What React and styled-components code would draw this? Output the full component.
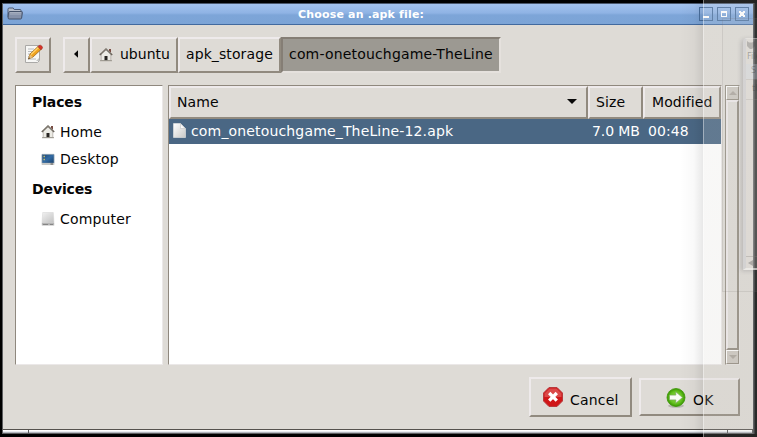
import React from "react";
import styled, { createGlobalStyle, css } from "styled-components";

const Global = createGlobalStyle`
  *, *::before, *::after { box-sizing: border-box; }
  html, body { margin: 0; background: #000; overflow: hidden; }
  body { font: 14px/18px "DejaVu Sans", sans-serif; color: #050505; }
  svg { display: block; flex: none; }
`;

const raised = css`
  border: 2px solid;
  border-color: #eeeaeb #918a7f #918a7f #eeeaeb;
`;

const Desktop = styled.div`
  position: relative;
  width: 757px;
  height: 437px;
  padding: 3px 3px 3px 2px;
  background: #000;
  overflow: hidden;
`;

const Window = styled.div`
  height: 431px;
  display: flex;
  flex-direction: column;
  background: #dedbd6;
  border: 1px solid #5d5e60;
  border-top-color: #49566b;
`;

const TitleBar = styled.header`
  height: 21px;
  flex: none;
  display: flex;
  align-items: center;
  padding: 0 4px;
  background: linear-gradient(#a3c2ee, #8fb3e4 45%, #7da5d8 55%, #7ca4d6);
  border-bottom: 1px solid #426a9f;
`;

const Title = styled.h1`
  flex: 1;
  margin: 0;
  padding: 1px 0 0 275px;
  font-size: 11px;
  line-height: 18px;
  letter-spacing: 0.17px;
  color: #fff;
`;

const WindowControls = styled.div`
  display: flex;
  gap: 4px;
`;

const ControlButton = styled.button`
  width: 14px;
  height: 14px;
  padding: 0;
  border: 1px solid #4a709f;
  background: transparent;
`;

const Toolbar = styled.nav`
  height: 36px;
  flex: none;
  display: flex;
  margin: 12px 0 12px 12px;
`;

const ToolButton = styled.button`
  ${raised}
  width: ${(p) => p.$w}px;
  height: 36px;
  padding: 0 0 2px ${(p) => p.$pad || 0}px;
  margin-right: ${(p) => p.$gap || 0}px;
  display: flex;
  align-items: center;
  gap: 7px;
  background: #dedbd6;
  color: inherit;
  font: inherit;
  letter-spacing: ${(p) => p.$track || 0}px;
  white-space: nowrap;
  ${(p) =>
    p.$active &&
    css`
      background: #9c9992;
      border-color: #857e75 #e5e1dd #e5e1dd #857e75;
    `}
`;

const Panels = styled.main`
  height: 280px;
  flex: none;
  display: flex;
  margin-left: 12px;
`;

const sunken = css`
  border: 1px solid;
  border-color: #8f887e #ebe8e8 #ebe8e8 #8f887e;
  background: #fff;
`;

const Sidebar = styled.aside`
  ${sunken}
  width: 148px;
  margin-right: 5px;
  padding-top: 1px;
`;

const GroupTitle = styled.h2`
  height: ${(p) => p.$h}px;
  margin: 0;
  padding: ${(p) => p.$top}px 0 0 16px;
  font-size: 14px;
  line-height: 18px;
  letter-spacing: -0.12px;
`;

const PlaceItem = styled.div`
  height: 27px;
  display: flex;
  align-items: center;
  gap: 5px;
  padding-left: 25px;
  letter-spacing: 0.16px;
`;

const FileList = styled.section`
  ${sunken}
  width: 554px;
  margin-right: 3px;
`;

const Row = styled.div`
  display: grid;
  grid-template-columns: 419px 55px 78px;
`;

const HeaderCell = styled.div`
  ${raised}
  height: 33px;
  display: flex;
  align-items: center;
  justify-content: space-between;
  padding: 0 8px 1px ${(p) => p.$pad}px;
  background: #dedbd6;
  letter-spacing: 0.1px;
  white-space: nowrap;
`;

const FileRow = styled(Row)`
  height: 25px;
  align-items: center;
  background: #4a6784;
  color: #fff;
`;

const FileCell = styled.div`
  display: flex;
  align-items: center;
  gap: 5px;
  padding: 0 0 2px ${(p) => p.$pad}px;
  letter-spacing: ${(p) => p.$track || 0}px;
  white-space: nowrap;
`;

const ScrollBar = styled.div`
  width: 15px;
  display: flex;
  flex-direction: column;
  background: #ccc7c0;
  border: 1px solid;
  border-color: #918a7f #e5e2df #e5e2df #918a7f;
`;

const ScrollArrow = styled.button`
  height: 14px;
  flex: none;
  padding: 0;
  display: grid;
  place-items: center;
  background: #ccc7c0;
  border: 1px solid;
  border-color: #fff #918a7f #918a7f #fff;
`;

const ScrollThumb = styled.div`
  ${raised}
  flex: 1;
  background: #dedbd6;
`;

const Actions = styled.footer`
  display: flex;
  align-items: flex-start;
  gap: 7px;
  margin: 12px 0 0 526px;
  height: 52px;
  flex: none;
`;

const ActionButton = styled.button`
  ${raised}
  width: ${(p) => p.$w}px;
  height: ${(p) => p.$h}px;
  margin-top: ${(p) => p.$top || 0}px;
  padding: 7px 0 0 ${(p) => p.$pad}px;
  display: flex;
  gap: ${(p) => p.$gap}px;
  background: #dedbd6;
  color: inherit;
  font: inherit;
  letter-spacing: 0.2px;
`;

const ActionLabel = styled.span`
  padding-top: ${(p) => p.$top}px;
`;

const ResizeBar = styled.div`
  height: 4px;
  margin-top: auto;
  display: flex;
  border-top: 1px solid #55524e;
`;

const ResizePart = styled.div`
  width: ${(p) => p.$w}px;
  background: linear-gradient(#fff 0 33%, #e8ebef 33% 66%, #b5b9c0 66%);
  border-right: 1px solid #58585a;
`;

const GhostShade = styled.div`
  position: absolute;
  inset: 0 54px 0 auto;
  width: 23px;
  pointer-events: none;
  background: linear-gradient(90deg, transparent, rgba(0, 0, 0, 0.025) 60%, rgba(0, 0, 0, 0.09));
`;

const GhostWindow = styled.div`
  position: absolute;
  inset: 0 0 0 auto;
  width: 54px;
  pointer-events: none;
  background:
    linear-gradient(90deg, rgba(255, 255, 255, 0.4) 1px, transparent 1px),
    linear-gradient(rgba(222, 220, 215, 0.16), rgba(203, 200, 193, 0.18));
`;

const GhostPane = styled.div`
  position: absolute;
  right: 0;
  top: 18px;
  width: 35px;
  height: 274px;
  border: solid rgba(100, 95, 95, 0.13);
  border-width: 1px 0 1px 1px;
  background: rgba(200, 198, 200, 0.06);
`;

const GhostDialog = styled.div`
  position: absolute;
  right: 0;
  top: 38px;
  width: 14px;
  height: 232px;
  display: flex;
  flex-direction: column;
  background: rgba(230, 226, 219, 0.2);
  border-left: 3px solid rgba(200, 202, 207, 0.45);
  border-bottom: 2px solid rgba(243, 242, 241, 0.6);
  border-top: 1px solid rgba(240, 240, 240, 0.35);
  border-radius: 4px 0 0 0;
  box-shadow: -2px 1px 4px rgba(60, 60, 70, 0.2);
  overflow: hidden;
  font-size: 8px;
  line-height: 11px;
  color: rgba(50, 50, 50, 0.35);
  white-space: nowrap;
  pointer-events: none;
`;

const GhostTitle = styled.div`
  height: 12px;
  padding: 2px 0 0 1px;
`;

const GhostLine = styled.div`
  height: ${(p) => p.$h}px;
  padding: ${(p) => p.$top}px 0 0 ${(p) => p.$pad}px;
  background: ${(p) => p.$bg || "transparent"};
`;

const GhostBox = styled.div`
  height: 21px;
  padding: 3px 0 0 6px;
  border: solid rgba(150, 145, 140, 0.2);
  border-width: 1px 0;
`;

const GhostScroll = styled.div`
  height: 12px;
  margin-top: auto;
  padding: 3px 0 0 2px;
  border-top: 1px solid rgba(130, 125, 120, 0.3);
`;

const RightEdge = styled.div`
  position: absolute;
  right: 0;
  top: 3px;
  width: 4px;
  height: 431px;
  background: linear-gradient(90deg, #494b4e 0 1px, #25282b 1px 2px, #050707 2px);
  pointer-events: none;
`;

const FolderIcon = () => (
  <svg width="16" height="14" viewBox="0 0 16 14">
    <path d="M1 10V2.2Q1 1 2.2 1h4l1 1.5H13q1 0 1 1V6" fill="#b8bfcc" stroke="#4c5c78" />
    <path d="M1.5 5.5Q2 4.5 3 4.5h11.5q1 0 .9 1L14.6 11q-.2 1-1.2 1H2.2q-1 0-1.1-1z" fill="#8591a9" stroke="#45536b" />
    <path d="M3 5.5h11M3 7h11" stroke="#a6afbf" />
  </svg>
);

const NoteIcon = () => (
  <svg width="21" height="22" viewBox="0 0 21 22">
    <path d="M2.5 2.5h14v15l-2 2h-12z" fill="#f7f7f5" stroke="#aaa9a7" />
    <path d="M5 6h6M5 8.5h5M5 11h4M5 13.5h3M5 16h8" stroke="#b8bbbd" />
    <path d="m13 18 3-3v3z" fill="#c4c5c3" />
    <path d="m7 11 8-7.5 3 3-8 7.5-4.5 2z" fill="#efa21d" stroke="#9e681d" strokeWidth=".8" />
    <path d="m8 11.5 7.5-7" stroke="#ffd36d" strokeWidth="1.2" />
    <path d="m15 3.5 1.2-1q1.3-.8 2.7.7 1.2 1.3.1 2.5L18 6.8z" fill="#d83227" stroke="#a33127" strokeWidth=".7" />
    <path d="m5.5 16 1.4-4.5L10 14z" fill="#e7bd79" />
    <path d="m5.2 16.2.8-2 1 1.1z" fill="#342d25" />
  </svg>
);

const HouseIcon = () => (
  <svg width="14" height="15" viewBox="0 0 14 15">
    <path d="M10 2h2v5h-2z" fill="#7a4d44" />
    <path d="M2.2 7 7 2.5 11.8 7v6.5H2.2z" fill="#ecebe5" stroke="#aaa59d" strokeWidth=".7" />
    <path d="M.8 8 7 2l6.2 6" fill="none" stroke="#6b655d" strokeWidth="1.6" />
    <path d="M2 6.2 7 1.5l5 4.7" fill="none" stroke="#aaa69c" strokeWidth=".7" />
    <path d="M5.5 9h3v4.5h-3z" fill="#272421" />
    <path d="M1 13.7h12" stroke="#99958d" />
  </svg>
);

const DesktopIcon = () => (
  <svg width="14" height="14" viewBox="0 0 14 14">
    <defs>
      <linearGradient id="screen" x2="1" y2="1">
        <stop stopColor="#1f4774" /><stop offset=".5" stopColor="#326ba4" /><stop offset="1" stopColor="#173d67" />
      </linearGradient>
    </defs>
    <path d="M1 2.4h12v8.8H1z" fill="url(#screen)" stroke="#8197aa" strokeWidth=".8" />
    <path d="M.7 11h12.6v2H.7z" fill="#c6c7c5" />
    <path d="M2.5 4.5h1.4M2.5 7.5h1.4" stroke="#d1c66c" strokeWidth="1.4" />
    <path d="M9.5 12h2.5" stroke="#555" />
  </svg>
);

const DriveIcon = () => (
  <svg width="14" height="14" viewBox="0 0 14 14">
    <defs>
      <linearGradient id="drive" x2=".8" y2="1">
        <stop stopColor="#f1f1f1" /><stop offset="1" stopColor="#c5c5c5" />
      </linearGradient>
    </defs>
    <path d="M1.7.5h10.6l.7 10.5H1z" fill="url(#drive)" stroke="#d2d2d2" strokeWidth=".5" />
    <path d="M.8 11h12.4v2.5H.8z" fill="#b4b4b4" />
    <path d="M2 12.5h5M9 12.5h3" stroke="#858585" />
  </svg>
);

const FileIcon = () => (
  <svg width="13" height="15" viewBox="0 0 13 15">
    <defs>
      <linearGradient id="paper" x2="1" y2="1">
        <stop stopColor="#fff" /><stop offset="1" stopColor="#c9c9c7" />
      </linearGradient>
    </defs>
    <path d="M.5.5h7l5 5v9H.5z" fill="url(#paper)" stroke="#e8e8e5" strokeWidth=".6" />
    <path d="M7.5.7 12.2 5.5H7.5z" fill="#fafafa" stroke="#bbb" strokeWidth=".5" />
  </svg>
);

const CancelIcon = () => (
  <svg width="22" height="22" viewBox="0 0 22 22">
    <path d="M7 1.5h8L20.5 7v8L15 20.5H7L1.5 15V7z" fill="#d01618" stroke="#b83a3d" />
    <path d="M7.5 2.5h7l5 5V11H2.5V7.5z" fill="#e0605e" opacity=".7" />
    <path d="m7.2 7 7.6 7.6m0-7.6-7.6 7.6" stroke="#fff" strokeWidth="3.3" />
  </svg>
);

const OkIcon = () => (
  <svg width="20" height="22" viewBox="0 0 20 22">
    <defs>
      <radialGradient id="green">
        <stop stopColor="#8bd747" /><stop offset=".65" stopColor="#68c522" /><stop offset="1" stopColor="#389600" />
      </radialGradient>
    </defs>
    <ellipse cx="10" cy="18.8" rx="8" ry="2" fill="#b5b6ae" />
    <circle cx="10" cy="10.5" r="9" fill="url(#green)" stroke="#3a9604" strokeWidth=".8" />
    <path d="M3.5 8.1h6.3V4.8l6.7 5.7-6.7 5.7v-3.3H3.5z" fill="#f9fcf6" stroke="#79a85b" strokeWidth=".7" />
  </svg>
);

const ControlMark = ({ kind }) => (
  <svg width="12" height="12" viewBox="0 0 12 12" shapeRendering="crispEdges">
    {kind === "min" && <path d="M3 8h6v2H3z" fill="#fff" />}
    {kind === "max" && <path d="M3 3h6v6H3zM4 5v3h4V5z" fill="#fff" fillRule="evenodd" />}
    {kind === "close" && <path d="M3 3h2v1h2V3h2v2H8v2h1v2H7V8H5v1H3V7h1V5H3z" fill="#fff" />}
  </svg>
);

const Triangle = ({ d, w = 8, h = 8, color = "#090909" }) => (
  <svg width={w} height={h} viewBox={`0 0 ${w} ${h}`}>
    <path d={d} fill={color} />
  </svg>
);

export default function App() {
  return (
    <Desktop>
      <Global />
      <Window>
        <TitleBar>
          <FolderIcon />
          <Title>Choose an .apk file:</Title>
          <WindowControls>
            {["min", "max", "close"].map((kind) => (
              <ControlButton key={kind} aria-label={kind}><ControlMark kind={kind} /></ControlButton>
            ))}
          </WindowControls>
        </TitleBar>
        <Toolbar>
          <ToolButton $w={36} $pad={6} $gap={12} aria-label="Edit location"><NoteIcon /></ToolButton>
          <ToolButton $w={27} $pad={7} aria-label="Back"><Triangle d="M6 .3v7.4L2 4z" /></ToolButton>
          <ToolButton $w={88} $pad={7}><HouseIcon />ubuntu</ToolButton>
          <ToolButton $w={103} $pad={6} $track={0.1}>apk_storage</ToolButton>
          <ToolButton $w={220} $pad={6} $track={0.18} $active>com-onetouchgame-TheLine</ToolButton>
        </Toolbar>
        <Panels>
          <Sidebar>
            <GroupTitle $h={31} $top={6}>Places</GroupTitle>
            <PlaceItem><HouseIcon />Home</PlaceItem>
            <PlaceItem><DesktopIcon />Desktop</PlaceItem>
            <GroupTitle $h={33} $top={8}>Devices</GroupTitle>
            <PlaceItem><DriveIcon />Computer</PlaceItem>
          </Sidebar>
          <FileList>
            <Row>
              <HeaderCell $pad={6}>Name<Triangle w={12} h={6} d="M1 0h10L6 5z" /></HeaderCell>
              <HeaderCell $pad={6}>Size</HeaderCell>
              <HeaderCell $pad={7}>Modified</HeaderCell>
            </Row>
            <FileRow>
              <FileCell $pad={4} $track={0.16}><FileIcon />com_onetouchgame_TheLine-12.apk</FileCell>
              <FileCell $pad={4} $track={-0.1}>7.0 MB</FileCell>
              <FileCell $pad={5} $track={0.1}>00:48</FileCell>
            </FileRow>
          </FileList>
          <ScrollBar>
            <ScrollArrow aria-label="Scroll up"><Triangle w={8} h={5} d="M0 4h8L4 0z" color="#aaa49c" /></ScrollArrow>
            <ScrollThumb />
            <ScrollArrow aria-label="Scroll down"><Triangle w={8} h={5} d="M0 0h8L4 4z" color="#aaa49c" /></ScrollArrow>
          </ScrollBar>
        </Panels>
        <Actions>
          <ActionButton $w={103} $h={40} $pad={11} $gap={6}><CancelIcon /><ActionLabel $top={5}>Cancel</ActionLabel></ActionButton>
          <ActionButton $w={101} $h={38} $top={1} $pad={25} $gap={7}><OkIcon /><ActionLabel $top={4}>OK</ActionLabel></ActionButton>
        </Actions>
        <ResizeBar><ResizePart $w={26} /><ResizePart $w={699} /><ResizePart $w={25} /></ResizeBar>
      </Window>
      <RightEdge />
      <GhostShade />
      <GhostWindow />
      <GhostPane />
      <GhostDialog>
        <GhostTitle><Triangle w={8} h={8} d="M0 0l2 1.5h3L8 0v5L5 8H3L0 5z" color="rgba(60,60,60,.25)" /></GhostTitle>
        <GhostLine $h={13} $top={0} $pad={1}>File</GhostLine>
        <GhostLine $h={15} $top={1} $pad={5} $bg="rgba(205, 215, 230, 0.25)">S</GhostLine>
        <GhostBox>th</GhostBox>
        <GhostScroll><Triangle w={5} h={6} d="M5 0v6L0 3z" color="rgba(60,60,60,.3)" /></GhostScroll>
      </GhostDialog>
    </Desktop>
  );
}
